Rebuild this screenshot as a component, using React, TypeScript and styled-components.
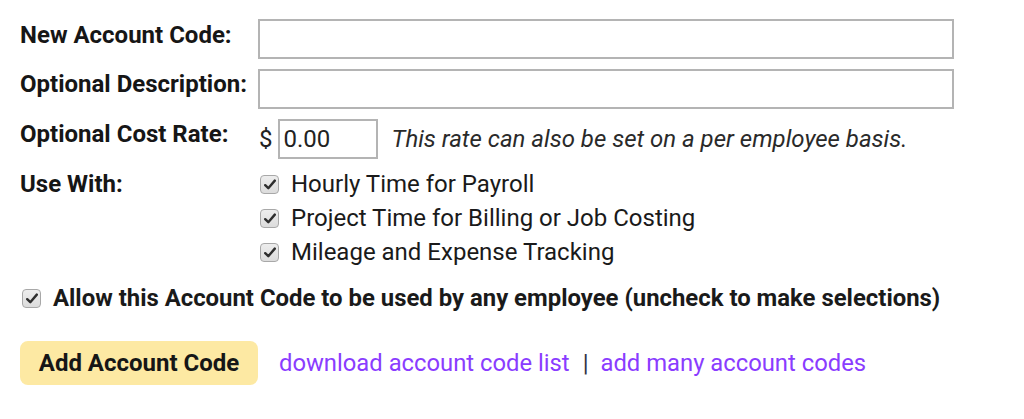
import React from "react";
import styled, { createGlobalStyle } from "styled-components";

const Global = createGlobalStyle`
  html, body { margin: 0; padding: 0; background: #ffffff; }
  body { font-family: Roboto, "Liberation Sans", Arial, sans-serif; color: #1a1a1a; }
`;

const Page = styled.div`
  padding: 19px 20px 0 20px;
  width: 1024px;
  box-sizing: border-box;
`;

const Form = styled.div`
  display: grid;
  grid-template-columns: 238px 1fr;
  align-items: start;
  row-gap: 10px;
`;

const Label = styled.div<{ $pt?: number }>`
  font-size: 24px;
  line-height: 28px;
  font-weight: 700;
  color: #161616;
  padding-top: ${(p) => p.$pt ?? 2}px;
  white-space: nowrap;
`;

const Field = styled.div`
  display: flex;
  align-items: center;
`;

const TextInput = styled.input`
  width: 696px;
  height: 40px;
  box-sizing: border-box;
  border: 2px solid #b4b4b4;
  background: #fff;
  font-family: Roboto, "Liberation Sans", Arial, sans-serif;
  font-size: 24px;
  padding: 0 6px;
  outline: none;
`;

const Dollar = styled.span`
  font-size: 24px;
  color: #222;
  margin: 0 5px 0 1px;
`;

const RateInput = styled(TextInput)`
  width: 100px;
  padding: 0 4px;
  color: #222;
`;

const Hint = styled.span`
  font-size: 24px;
  font-style: italic;
  color: #2a2a2a;
  margin-left: 14px;
  white-space: nowrap;
`;

const Checks = styled.div`
  display: flex;
  flex-direction: column;
  margin-top: -2px;
`;

const CheckRow = styled.label<{ $bold?: boolean }>`
  display: flex;
  align-items: center;
  height: 34px;
  font-size: ${(p) => (p.$bold ? "23.9px" : "24px")};
  font-weight: ${(p) => (p.$bold ? 700 : 400)};
  color: #1a1a1a;
  white-space: nowrap;
`;

const Box = styled.span`
  width: 17px;
  height: 17px;
  border: 1.5px solid #a8a8a8;
  border-radius: 4px;
  background: linear-gradient(#ededed, #dcdcdc);
  display: inline-flex;
  align-items: center;
  justify-content: center;
  margin-left: 2px;
  margin-right: 12px;
  flex: none;
`;

const AllowRow = styled(CheckRow)`
  margin-top: 12px;
`;

const Actions = styled.div`
  display: flex;
  align-items: center;
  margin-top: 26px;
`;

const Button = styled.button`
  width: 238px;
  height: 44px;
  border: none;
  border-radius: 8px;
  background: #fde9a3;
  font-family: Roboto, "Liberation Sans", Arial, sans-serif;
  font-size: 24px;
  font-weight: 700;
  color: #161616;
  cursor: pointer;
  padding: 0;
`;

const Link = styled.a`
  font-size: 23.8px;
  color: #8a3cff;
  text-decoration: none;
`;

const Sep = styled.span`
  font-size: 24px;
  color: #334;
  margin: 0 12px 0 13px;
`;

const LinkWrap = styled.div`
  margin-left: 21px;
  display: flex;
  align-items: center;
  white-space: nowrap;
`;

const Check = () => (
  <svg width="12" height="11" viewBox="0 0 12 11">
    <path d="M1.2 6.2 L4.3 9.2 L10.8 1.6" fill="none" stroke="#2e2e2e" strokeWidth="2.4" strokeLinecap="round" strokeLinejoin="round" />
  </svg>
);

export default function App() {
  return (
    <Page>
      <Global />
      <Form>
        <Label>New Account Code:</Label>
        <Field>
          <TextInput />
        </Field>
        <Label $pt={1}>Optional Description:</Label>
        <Field>
          <TextInput />
        </Field>
        <Label $pt={1}>Optional Cost Rate:</Label>
        <Field>
          <Dollar>$</Dollar>
          <RateInput defaultValue="0.00" />
          <Hint>This rate can also be set on a per employee basis.</Hint>
        </Field>
        <Label $pt={1}>Use With:</Label>
        <Checks>
          <CheckRow>
            <Box><Check /></Box>Hourly Time for Payroll
          </CheckRow>
          <CheckRow>
            <Box><Check /></Box>Project Time for Billing or Job Costing
          </CheckRow>
          <CheckRow>
            <Box><Check /></Box>Mileage and Expense Tracking
          </CheckRow>
        </Checks>
      </Form>
      <AllowRow $bold>
        <Box><Check /></Box>Allow this Account Code to be used by any employee (uncheck to make selections)
      </AllowRow>
      <Actions>
        <Button>Add Account Code</Button>
        <LinkWrap>
          <Link href="#">download account code list</Link>
          <Sep>|</Sep>
          <Link href="#">add many account codes</Link>
        </LinkWrap>
      </Actions>
    </Page>
  );
}
